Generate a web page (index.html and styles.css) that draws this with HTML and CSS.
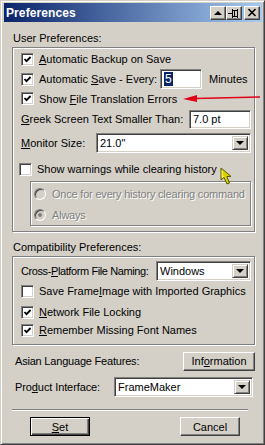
FILE: index.html
```html
<!DOCTYPE html>
<html lang="en">
<head>
    <meta charset="UTF-8">
    <title>Preferences</title>
    <link rel="stylesheet" href="styles.css">
</head>
<body>
    <div class="window">
        <div class="titlebar">
            <span class="title">Preferences</span>
            <div class="caption-buttons">
                <span class="cbtn">
                    <svg width="10" height="8" viewBox="0 0 10 8"><polygon points="1,6 9,6 5,2" fill="#000"/></svg>
                </span>
                <span class="cbtn">
                    <svg width="12" height="10" viewBox="0 0 12 10"><path d="M0 5.5h4M4.5 1v9M4.5 2.5h5v6h-5M6.5 3v5M9.5 1v9" stroke="#000" fill="none"/></svg>
                </span>
                <span class="cbtn close">
                    <svg width="10" height="9" viewBox="0 0 10 9"><path d="M1.5 1l7 7M8.5 1l-7 7" stroke="#000" stroke-width="1.6"/></svg>
                </span>
            </div>
        </div>

        <div class="content">
            <div class="group-label first">User Preferences:</div>
            <div class="group user-group">
                <div class="row">
                    <span class="check on"><svg viewBox="0 0 9 9"><polyline points="1.5,4 3.5,6.2 7.6,2" stroke="#000" stroke-width="1.8" fill="none"/></svg></span>
                    <span><u>A</u>utomatic Backup on Save</span>
                </div>
                <div class="row">
                    <span class="check on"><svg viewBox="0 0 9 9"><polyline points="1.5,4 3.5,6.2 7.6,2" stroke="#000" stroke-width="1.8" fill="none"/></svg></span>
                    <span class="save-label">Automatic <u>S</u>ave - Every:</span>
                    <span class="field minutes-field"><span class="sel">5</span></span>
                    <span class="minutes">Minutes</span>
                </div>
                <div class="row short">
                    <span class="check on"><svg viewBox="0 0 9 9"><polyline points="1.5,4 3.5,6.2 7.6,2" stroke="#000" stroke-width="1.8" fill="none"/></svg></span>
                    <span>Show <u>F</u>ile Translation Errors</span>
                </div>
                <div class="row greek-row">
                    <span class="greek-label"><u>G</u>reek Screen Text Smaller Than:</span>
                    <span class="field greek-field">7.0 pt</span>
                </div>
                <div class="row monitor-row">
                    <span class="monitor-label"><u>M</u>onitor Size:</span>
                    <span class="field combo">21.0"<span class="drop"></span></span>
                </div>
                <div class="row warn-row">
                    <span class="check"></span>
                    <span>Show warnings while clearing history</span>
                </div>
                <div class="subgroup">
                    <div class="row disabled">
                        <span class="radio"></span>
                        <span>Once for every history clearing command</span>
                    </div>
                    <div class="row disabled always">
                        <span class="radio on"></span>
                        <span>Always</span>
                    </div>
                </div>
            </div>

            <div class="group-label second">Compatibility Preferences:</div>
            <div class="group compat-group">
                <div class="row">
                    <span class="cross-label">Cross-<u>P</u>latform File Naming:</span>
                    <span class="field combo">Windows<span class="drop"></span></span>
                </div>
                <div class="row">
                    <span class="check"></span>
                    <span>Save Frame<u>I</u>mage with Imported Graphics</span>
                </div>
                <div class="row network-row">
                    <span class="check on"><svg viewBox="0 0 9 9"><polyline points="1.5,4 3.5,6.2 7.6,2" stroke="#000" stroke-width="1.8" fill="none"/></svg></span>
                    <span><u>N</u>etwork File Locking</span>
                </div>
                <div class="row last">
                    <span class="check on"><svg viewBox="0 0 9 9"><polyline points="1.5,4 3.5,6.2 7.6,2" stroke="#000" stroke-width="1.8" fill="none"/></svg></span>
                    <span><u>R</u>emember Missing Font Names</span>
                </div>
            </div>

            <div class="row asian-row">
                <span class="asian-label">Asian Language Features:</span>
                <span class="button info-btn">Inf<u>o</u>rmation</span>
            </div>
            <div class="row product-row">
                <span class="product-label">Pro<u>d</u>uct Interface:</span>
                <span class="field combo">FrameMaker<span class="drop"></span></span>
            </div>

            <div class="separator"></div>

            <div class="row actions">
                <span class="button default"><u>S</u>et</span>
                <span class="button cancel">Cancel</span>
            </div>
        </div>

        <!-- annotations drawn on top of the screenshot -->
        <svg class="red-arrow" width="82" height="12" viewBox="0 0 82 12">
            <path d="M14 6.5 L79 5" stroke="#e00018" stroke-width="1.3" fill="none"/>
            <polygon points="2,7 16,3 16,10" fill="#e00018"/>
        </svg>
        <svg class="pointer" width="14" height="20" viewBox="0 0 14 20">
            <path d="M1 1 L1 13 L4 10.5 L7 17 L9.5 16 L6.8 9.6 L11 9.4 Z" fill="#d9d200" stroke="#5a5600" stroke-width="1"/>
            <path d="M2.2 3.5 L2.2 10.5 L4 9" stroke="#fff86a" fill="none"/>
        </svg>
    </div>
</body>
</html>
```

FILE: styles.css
```css
* {
    box-sizing: border-box;
}

body {
    margin: 0;
    font-family: "Liberation Sans", Arial, sans-serif;
    font-size: 11px;
    color: #000;
    background-color: #d4d0c8;
}

.window {
    position: relative;
    width: 265px;
    height: 445px;
    background-color: #d4d0c8;
    border: 1px solid;
    border-color: #d4d0c8 #404040 #404040 #d4d0c8;
    box-shadow: inset 1px 1px #fff, inset -1px -1px #808080;
    padding: 2px 2px 0 3px;
    display: flex;
    flex-direction: column;
    overflow: hidden;
}

.titlebar {
    height: 19px;
    display: flex;
    align-items: center;
    padding: 0 2px 0 2px;
    background: linear-gradient(90deg, #0a246a, #a6caf0);
    color: #fff;
    font-weight: bold;
    font-size: 12px;
}

.title {
    flex: 1;
    letter-spacing: 0.1px;
}

.caption-buttons {
    display: flex;
}

.cbtn {
    width: 16px;
    height: 14px;
    background-color: #d4d0c8;
    border: 1px solid;
    border-color: #fff #404040 #404040 #fff;
    box-shadow: inset -1px -1px #808080;
    display: flex;
    align-items: center;
    justify-content: center;
}

.cbtn.close {
    margin-left: 2px;
}

.content {
    flex: 1;
    display: flex;
    flex-direction: column;
    padding: 0 7px 0 8px;
}

.group-label {
    height: 14px;
    line-height: 14px;
    padding-left: 1px;
    margin-bottom: 2px;
}

.group-label.first {
    margin-top: 9px;
}

.group-label.second {
    margin-top: 8px;
}

.group {
    border: 1px solid #808080;
    box-shadow: inset 1px 1px #fff, 1px 1px #fff;
    padding: 1px 3px 5px 8px;
}

.compat-group {
    padding-top: 4px;
    padding-bottom: 6px;
}

.row {
    height: 20px;
    display: flex;
    align-items: center;
    white-space: nowrap;
}

.row.short {
    height: 19px;
}

.row.last {
    height: 16px;
}

.greek-row {
    margin-top: 1px;
}

.monitor-row {
    margin-top: 4px;
}

.warn-row {
    margin-top: 6px;
}

.warn-row .check {
    margin-left: -2px;
}

.network-row {
    margin-top: 1px;
}

.check {
    width: 13px;
    height: 13px;
    flex: none;
    background-color: #fff;
    border: 1px solid;
    border-color: #808080 #fff #fff #808080;
    box-shadow: inset 1px 1px #404040, inset -1px -1px #d4d0c8;
    margin-right: 5px;
    padding: 1px;
    display: flex;
}

.check svg {
    width: 9px;
    height: 9px;
}

.field {
    height: 20px;
    background-color: #fff;
    border: 1px solid;
    border-color: #808080 #fff #fff #808080;
    box-shadow: inset 1px 1px #404040, inset -1px -1px #d4d0c8;
    padding: 0 3px;
    display: flex;
    align-items: center;
}

.save-label {
    width: 121px;
}

.minutes-field {
    width: 42px;
    font-size: 12px;
}

.sel {
    background-color: #0a246a;
    color: #fff;
    padding: 0 1px;
}

.minutes {
    margin-left: 7px;
}

.greek-label {
    width: 168px;
}

.greek-field {
    width: 62px;
    height: 19px;
}

.monitor-label {
    width: 75px;
}

.cross-label {
    width: 135px;
    letter-spacing: -0.4px;
}

.product-label {
    width: 99px;
    letter-spacing: -0.1px;
}

.combo {
    flex: 1;
    position: relative;
}

.drop {
    position: absolute;
    right: 2px;
    top: 2px;
    width: 16px;
    height: 14px;
    background-color: #d4d0c8;
    border: 1px solid;
    border-color: #d4d0c8 #404040 #404040 #d4d0c8;
    box-shadow: inset 1px 1px #fff, inset -1px -1px #808080;
}

.drop::after {
    content: "";
    position: absolute;
    left: 3px;
    top: 4px;
    border-left: 4px solid transparent;
    border-right: 4px solid transparent;
    border-top: 4px solid #000;
}

.subgroup {
    margin: 2px 0 0 9px;
    border: 1px solid #808080;
    box-shadow: inset 1px 1px #fff, 1px 1px #fff;
    padding: 2px 3px 0 3px;
    height: 45px;
}

.subgroup .always {
    margin-top: 1px;
}

.disabled {
    color: #808080;
    text-shadow: 1px 1px #fff;
    letter-spacing: -0.2px;
}

.radio {
    width: 12px;
    height: 12px;
    border-radius: 50%;
    border: 1px solid;
    border-color: #808080 #fff #fff #808080;
    box-shadow: inset 1px 1px #404040;
    background-color: #d4d0c8;
    margin-right: 6px;
    position: relative;
    flex: none;
}

.radio.on::after {
    content: "";
    position: absolute;
    left: 3px;
    top: 3px;
    width: 4px;
    height: 4px;
    border-radius: 50%;
    background-color: #808080;
}

.asian-row {
    margin-top: 6px;
    padding-left: 3px;
}

.asian-label {
    letter-spacing: -0.2px;
}

.product-row {
    margin-top: 6px;
    padding-left: 3px;
    padding-right: 2px;
}

.button {
    height: 20px;
    background-color: #d4d0c8;
    border: 1px solid;
    border-color: #fff #404040 #404040 #fff;
    box-shadow: inset -1px -1px #808080;
    display: flex;
    align-items: center;
    justify-content: center;
}

.info-btn {
    width: 72px;
    margin-left: auto;
    height: 19px;
}

.separator {
    margin: 12px 7px 0 0;
    height: 2px;
    border-top: 1px solid #808080;
    border-bottom: 1px solid #fff;
}

.actions {
    margin-top: 6px;
    height: 19px;
}

.actions .button {
    width: 60px;
    height: 19px;
}

.button.default {
    margin-left: 18px;
    border: 1px solid #000;
    box-shadow: inset 1px 1px #fff, inset -1px -1px #404040, inset -2px -2px #808080;
}

.button.cancel {
    margin-left: 90px;
}

.red-arrow {
    position: absolute;
    left: 180px;
    top: 91px;
}

.pointer {
    position: absolute;
    left: 219px;
    top: 166px;
}
```
